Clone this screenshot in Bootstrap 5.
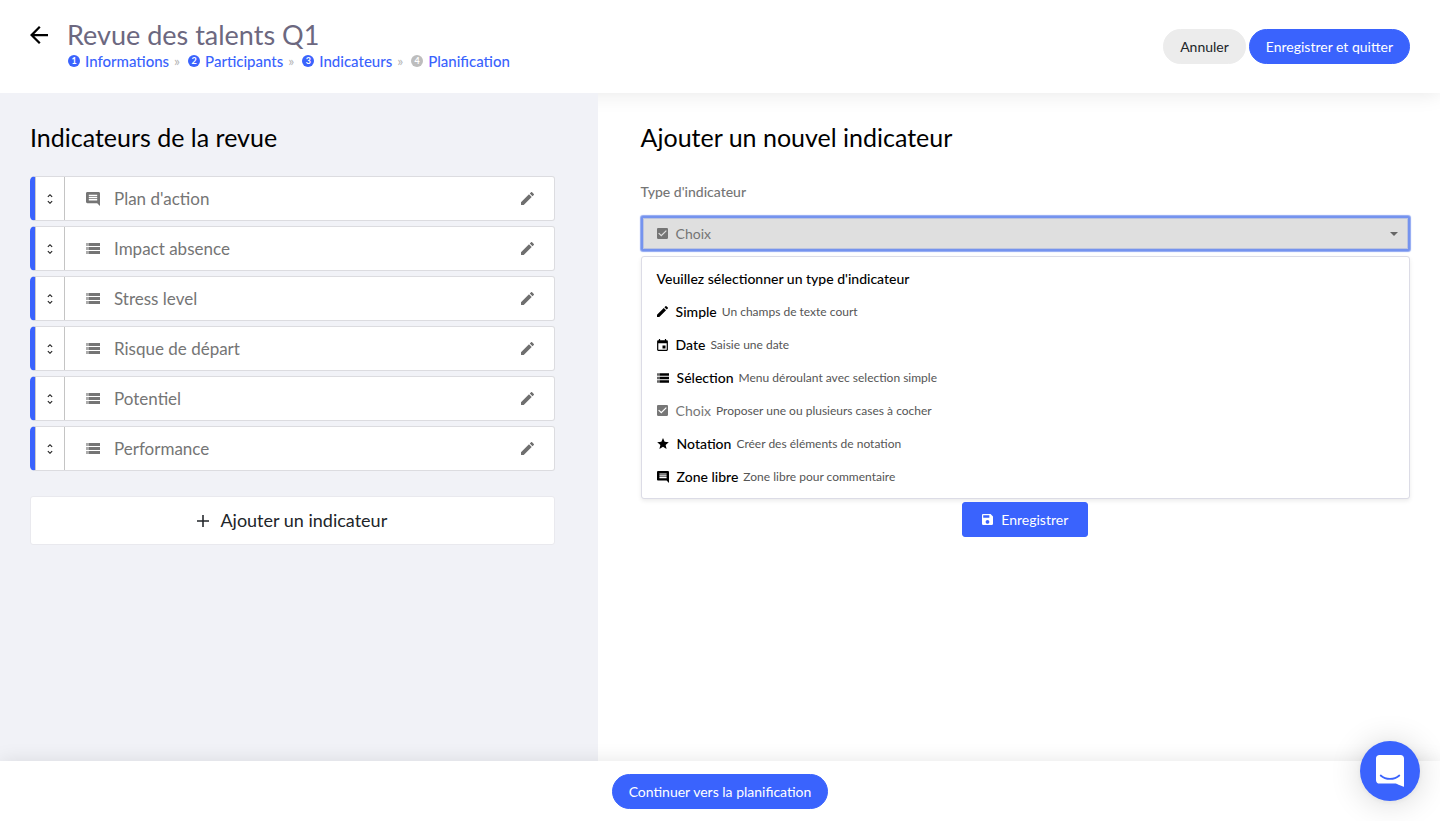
<!DOCTYPE html>
<html lang="fr">
<head>
<meta charset="utf-8">
<meta name="viewport" content="width=device-width, initial-scale=1">
<title>Revue des talents Q1</title>
<link href="https://cdn.jsdelivr.net/npm/bootstrap@5.3.0/dist/css/bootstrap.min.css" rel="stylesheet">
<style>
:root { --brand: #3a63fd; --muted: #757575; }
body { font-family: Lato, "Liberation Sans", sans-serif; font-size: 14px; line-height: 21px; color: #000; }
svg { fill: currentColor; flex: none; display: block; }
.top-bar { height: 93px; padding: 0 30px; box-shadow: 0 0 20px rgba(0,0,0,.1); }
.action-group { gap: 3px; }
.back-link { color: #000; padding: 26px 19px 0 0; }
.page-title { font-size: 27px; line-height: 30px; color: #6c6880; font-weight: 400; padding-top: 20px; }
.steps { padding-left: 1px; }
.steps a { color: var(--brand); font-weight: 500; font-size: 15px; line-height: 20px; }
.steps .step-no { width: 12px; height: 12px; font-size: 9px; line-height: 12px; font-weight: 700; background: var(--brand); margin-right: 5px; }
.steps .step-no.todo { background: #bdbdbd; }
.steps .sep { color: #b5b5b5; margin: 0 8px 0 5px; }
.btn { --bs-btn-font-size: 14px; --bs-btn-line-height: 21px; --bs-btn-padding-y: 6px; --bs-btn-padding-x: 16px; }
.btn-brand { --bs-btn-bg: var(--brand); --bs-btn-color: #fff; --bs-btn-border-color: var(--brand); --bs-btn-hover-bg: #2850e8; --bs-btn-hover-color: #fff; }
.btn-soft { --bs-btn-bg: #ececec; --bs-btn-color: #212529; --bs-btn-border-color: #ececec; --bs-btn-hover-bg: #ddd; }
.review-panel { flex: 0 0 41.5%; background: #f1f2f7; padding: 28px 43px 28px 30px; z-index: 1; }
.editor-panel { padding: 28px 30px 28px 43px; }
.panel-title { font-size: 25px; line-height: 32px; font-weight: 400; margin-bottom: 23px; }
.indicator-list { gap: 5px; }
.indicator { height: 45px; background: #fff; border: 1px solid #dcdce0; border-left: 5px solid var(--brand); border-radius: 5px 3px 3px 5px; color: var(--muted); font-size: 17px; }
.handle { width: 30px; background: none; border: 0; border-left: 1px solid #ccc; border-right: 1px solid #c4c4c4; color: #222; }
.indicator .kind { width: 14px; margin: 0 14px 0 21px; }
.edit-btn { border: 0; background: none; color: #6f6f6f; padding: 0 20px; }
.add-btn { --bs-btn-font-size: 18px; --bs-btn-line-height: 27px; --bs-btn-padding-y: 10px; --bs-btn-bg: #fff; --bs-btn-color: #212529; --bs-btn-border-color: #e9e9ee; --bs-btn-hover-bg: #fafafa; --bs-btn-border-radius: 3px; margin-top: 25px; gap: 11px; }
.type-label { color: var(--muted); font-weight: 500; margin: 28px 0 14px; }
.type-select { height: 35px; border: 2px solid #7593ee; border-radius: 2px; background: #dfdfdf; color: var(--muted); padding: 0 10px 0 14px; box-shadow: 0 0 1px 1px #8ea7f2, inset 0 0 0 1px #bcc4df; outline: 0; }
.type-select .arrow-down { border: 4px solid transparent; border-top-color: #666; border-bottom: 0; }
.type-menu { --bs-dropdown-font-size: 14px; --bs-dropdown-border-color: #dcdce6; --bs-dropdown-border-radius: 3px; --bs-dropdown-padding-y: 5px; --bs-dropdown-item-padding-x: 15px; --bs-dropdown-item-padding-y: 6px; --bs-dropdown-link-color: #000; margin: 5px 0 3px; box-shadow: 0 2px 4px rgba(0,0,0,.08); }
.type-menu .dropdown-item { font-weight: 500; line-height: 21px; }
.type-menu .chosen { color: #777; font-weight: 400; }
.type-menu .hint { font-size: 12px; color: #555; font-weight: 400; margin-left: 5px; }
.type-menu svg, .type-select svg { margin-right: 8px; }
.save-btn { --bs-btn-padding-x: 19px; --bs-btn-border-radius: 3px; }
.bottom-bar { height: 60px; box-shadow: 0 0 20px rgba(0,0,0,.1); z-index: 2; }
.chat-btn { width: 60px; height: 60px; right: 20px; bottom: 20px; z-index: 3; border: 0; background: var(--brand); color: #fff; box-shadow: 0 1px 6px rgba(0,0,0,.06), 0 2px 32px rgba(0,0,0,.16); }
</style>
</head>
<body>
<svg class="d-none" aria-hidden="true">
  <symbol id="pencil" viewBox="3 3 18 18"><path d="M3 17.25V21h3.75L17.81 9.94l-3.75-3.75L3 17.25zM20.71 7.04c.39-.39.39-1.02 0-1.41l-2.34-2.34c-.39-.39-1.02-.39-1.41 0l-1.83 1.83 3.75 3.75 1.83-1.83z"/></symbol>
  <symbol id="rows" viewBox="0 0 14 11"><path d="M3 0h11v3H3zM3 4h11v3H3zM3 8h11v3H3z"/><path opacity=".6" d="M0 0h3v3H0zM0 4h3v3H0zM0 8h3v3H0z"/></symbol>
  <symbol id="comment" viewBox="2 2 20 20"><path d="M21.99 4c0-1.1-.89-2-1.99-2H4c-1.100 0-2 .9-2 2v12c0 1.100.9 2 2 2h14l4 4-.01-18zM18 14H6v-2h12v2zm0-3H6V9h12v2zm0-3H6V6h12v2z"/></symbol>
  <symbol id="date" viewBox="3 1 18 20"><path d="M17 12h-5v5h5v-5zM16 1v2H8V1H6v2H5c-1.110 0-1.990.9-1.990 2L3 19c0 1.100.89 2 2 2h14c1.100 0 2-.9 2-2V5c0-1.100-.9-2-2-2h-1V1h-2zm3 18H5V8h14v11z"/></symbol>
  <symbol id="check" viewBox="3 3 18 18"><path d="M19 3H5c-1.110 0-2 .9-2 2v14c0 1.100.89 2 2 2h14c1.110 0 2-.9 2-2V5c0-1.100-.89-2-2-2zm-9 14l-5-5 1.410-1.410L10 14.170l7.590-7.590L19 8l-9 9z"/></symbol>
  <symbol id="star" viewBox="2 2 20 19"><path d="M12 17.270L18.180 21l-1.640-7.030L22 9.240l-7.190-.61L12 2 9.190 8.630 2 9.240l5.460 4.730L5.820 21z"/></symbol>
  <symbol id="save" viewBox="3 3 18 18"><path d="M17 3H5c-1.110 0-2 .9-2 2v14c0 1.100.89 2 2 2h14c1.100 0 2-.9 2-2V7l-4-4zm-5 16c-1.660 0-3-1.340-3-3s1.340-3 3-3 3 1.340 3 3-1.340 3-3 3zm3-10H5V5h10v4z"/></symbol>
  <symbol id="move" viewBox="7 3 10 18"><path d="M12 5.830L15.170 9l1.410-1.410L12 3 7.410 7.590 8.830 9 12 5.830zm0 12.340L8.830 15l-1.410 1.410L12 21l4.590-4.590L15.170 15 12 18.170z"/></symbol>
  <symbol id="plus" viewBox="5 5 14 14"><path d="M19 12.900h-6.100V19h-1.800v-6.100H5v-1.800h6.100V5h1.800v6.100H19v1.800z"/></symbol>
</svg>
<div class="min-vh-100 d-flex flex-column">
  <header class="top-bar d-flex bg-white">
    <a class="back-link" href="#" aria-label="Retour"><svg width="18" height="18" viewBox="4 4 16 16"><path d="M20 11H7.830l5.590-5.590L12 4l-8 8 8 8 1.410-1.410L7.830 13H20v-2z"/></svg></a>
    <div class="flex-grow-1">
      <h1 class="page-title mb-0">Revue des talents Q1</h1>
      <ol class="steps list-unstyled d-flex mb-0">
        <li class="d-flex align-items-center"><span class="step-no rounded-circle text-white text-center">1</span><a class="text-decoration-none" href="#">Informations</a><span class="sep">»</span></li>
        <li class="d-flex align-items-center"><span class="step-no rounded-circle text-white text-center">2</span><a class="text-decoration-none" href="#">Participants</a><span class="sep">»</span></li>
        <li class="d-flex align-items-center"><span class="step-no rounded-circle text-white text-center">3</span><a class="text-decoration-none" href="#">Indicateurs</a><span class="sep">»</span></li>
        <li class="d-flex align-items-center"><span class="step-no todo rounded-circle text-white text-center">4</span><a class="text-decoration-none" href="#">Planification</a></li>
      </ol>
    </div>
    <div class="d-flex align-items-center action-group">
      <button type="button" class="btn btn-soft rounded-pill">Annuler</button>
      <button type="button" class="btn btn-brand rounded-pill">Enregistrer et quitter</button>
    </div>
  </header>
  <main class="d-flex flex-grow-1">
    <section class="review-panel position-relative">
      <h2 class="panel-title">Indicateurs de la revue</h2>
      <ul class="list-unstyled d-grid mb-0 indicator-list">
        <li class="indicator d-flex"><button class="handle d-flex align-items-center justify-content-center" aria-label="Déplacer"><svg width="6" height="10"><use href="#move"/></svg></button><span class="d-flex align-items-center flex-grow-1"><svg class="kind" height="14"><use href="#comment"/></svg>Plan d'action</span><button class="edit-btn" aria-label="Modifier"><svg width="13" height="13"><use href="#pencil"/></svg></button></li>
        <li class="indicator d-flex"><button class="handle d-flex align-items-center justify-content-center" aria-label="Déplacer"><svg width="6" height="10"><use href="#move"/></svg></button><span class="d-flex align-items-center flex-grow-1"><svg class="kind" height="11"><use href="#rows"/></svg>Impact absence</span><button class="edit-btn" aria-label="Modifier"><svg width="13" height="13"><use href="#pencil"/></svg></button></li>
        <li class="indicator d-flex"><button class="handle d-flex align-items-center justify-content-center" aria-label="Déplacer"><svg width="6" height="10"><use href="#move"/></svg></button><span class="d-flex align-items-center flex-grow-1"><svg class="kind" height="11"><use href="#rows"/></svg>Stress level</span><button class="edit-btn" aria-label="Modifier"><svg width="13" height="13"><use href="#pencil"/></svg></button></li>
        <li class="indicator d-flex"><button class="handle d-flex align-items-center justify-content-center" aria-label="Déplacer"><svg width="6" height="10"><use href="#move"/></svg></button><span class="d-flex align-items-center flex-grow-1"><svg class="kind" height="11"><use href="#rows"/></svg>Risque de départ</span><button class="edit-btn" aria-label="Modifier"><svg width="13" height="13"><use href="#pencil"/></svg></button></li>
        <li class="indicator d-flex"><button class="handle d-flex align-items-center justify-content-center" aria-label="Déplacer"><svg width="6" height="10"><use href="#move"/></svg></button><span class="d-flex align-items-center flex-grow-1"><svg class="kind" height="11"><use href="#rows"/></svg>Potentiel</span><button class="edit-btn" aria-label="Modifier"><svg width="13" height="13"><use href="#pencil"/></svg></button></li>
        <li class="indicator d-flex"><button class="handle d-flex align-items-center justify-content-center" aria-label="Déplacer"><svg width="6" height="10"><use href="#move"/></svg></button><span class="d-flex align-items-center flex-grow-1"><svg class="kind" height="11"><use href="#rows"/></svg>Performance</span><button class="edit-btn" aria-label="Modifier"><svg width="13" height="13"><use href="#pencil"/></svg></button></li>
      </ul>
      <button type="button" class="btn add-btn w-100 d-flex align-items-center justify-content-center"><svg width="12" height="12"><use href="#plus"/></svg>Ajouter un indicateur</button>
    </section>
    <section class="editor-panel flex-grow-1">
      <h2 class="panel-title mb-0">Ajouter un nouvel indicateur</h2>
      <label class="type-label d-block" for="type">Type d'indicateur</label>
      <button id="type" type="button" class="type-select w-100 d-flex align-items-center" aria-haspopup="true" aria-expanded="true"><svg width="11" height="11"><use href="#check"/></svg>Choix<span class="arrow-down ms-auto"></span></button>
      <div class="type-menu dropdown-menu show position-static w-100">
        <a class="dropdown-item" href="#">Veuillez sélectionner un type d'indicateur</a>
        <a class="dropdown-item d-flex align-items-center" href="#"><svg width="11" height="11"><use href="#pencil"/></svg>Simple <span class="hint">Un champs de texte court</span></a>
        <a class="dropdown-item d-flex align-items-center" href="#"><svg width="11" height="12"><use href="#date"/></svg>Date <span class="hint">Saisie une date</span></a>
        <a class="dropdown-item d-flex align-items-center" href="#"><svg width="12" height="10"><use href="#rows"/></svg>Sélection <span class="hint">Menu déroulant avec selection simple</span></a>
        <a class="dropdown-item d-flex align-items-center chosen" href="#"><svg width="11" height="11"><use href="#check"/></svg>Choix <span class="hint">Proposer une ou plusieurs cases à cocher</span></a>
        <a class="dropdown-item d-flex align-items-center" href="#"><svg width="12" height="11"><use href="#star"/></svg>Notation <span class="hint">Créer des éléments de notation</span></a>
        <a class="dropdown-item d-flex align-items-center" href="#"><svg width="12" height="12"><use href="#comment"/></svg>Zone libre <span class="hint">Zone libre pour commentaire</span></a>
      </div>
      <button type="button" class="btn btn-brand save-btn d-flex align-items-center mx-auto"><svg class="me-2" width="11" height="11"><use href="#save"/></svg>Enregistrer</button>
    </section>
  </main>
  <footer class="bottom-bar bg-white position-relative d-flex align-items-center justify-content-center">
    <button type="button" class="btn btn-brand rounded-pill">Continuer vers la planification</button>
  </footer>
</div>
<button type="button" class="chat-btn rounded-circle position-fixed d-flex align-items-center justify-content-center" aria-label="Ouvrir la messagerie">
  <svg width="28" height="32" viewBox="0 0 28 32"><path d="M28 32s-4.700-1.900-8.300-3.400H3.400C1.500 28.600 0 27.100 0 25.200V3.400C0 1.500 1.500 0 3.400 0h21.200C26.500 0 28 1.500 28 3.400V32z"/><path d="M4.700 20.500c2.400 2.100 5.700 3.400 9.300 3.400s6.900-1.300 9.300-3.400" fill="none" stroke="#3a63fd" stroke-width="1.800" stroke-linecap="round"/></svg>
</button>
<script src="https://cdn.jsdelivr.net/npm/bootstrap@5.3.0/dist/js/bootstrap.bundle.min.js"></script>
</body>
</html>
